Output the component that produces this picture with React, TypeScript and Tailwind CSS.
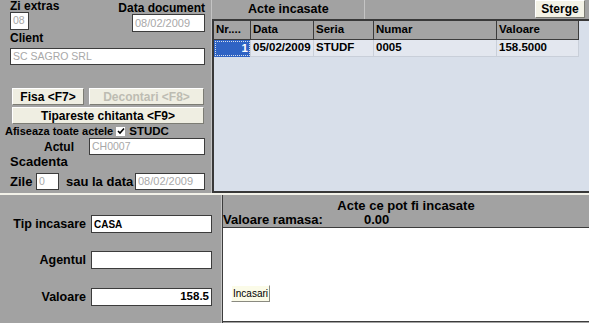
import React from "react";

const Field = ({
  className = "",
  children,
}: {
  className?: string;
  children?: React.ReactNode;
}) => (
  <div
    className={`bg-white border border-[#3c3c3c] flex items-center px-[2px] overflow-hidden whitespace-nowrap ${className}`}
  >
    {children}
  </div>
);

const WinButton = ({
  className = "",
  disabled = false,
  children,
}: {
  className?: string;
  disabled?: boolean;
  children: React.ReactNode;
}) => (
  <div
    className={`bg-[#efeee2] border border-t-white border-l-white border-b-[#7c7c74] border-r-[#7c7c74] flex items-center justify-center font-bold text-[12px] leading-none whitespace-nowrap ${
      disabled ? "text-[#bdbcb2]" : "text-black"
    } ${className}`}
  >
    {children}
  </div>
);

const columns = [
  { label: "Nr....", w: "w-[37px]" },
  { label: "Data", w: "w-[63px]" },
  { label: "Seria", w: "w-[60px]" },
  { label: "Numar", w: "w-[123px]" },
  { label: "Valoare", w: "w-[82px]" },
];

const rows = [{ nr: "1", data: "05/02/2009", seria: "STUDF", numar: "0005", valoare: "158.5000" }];

export default function App() {
  return (
    <div className="w-[589px] h-[323px] bg-[#a2a2a2] flex flex-col overflow-hidden font-['Liberation_Sans',Arial,sans-serif] text-black">
      {/* top half */}
      <div className="flex h-[193px]">
        {/* document details */}
        <div className="w-[211px] flex flex-col">
          <div className="flex justify-between h-[32px] pl-[10px] pr-[6px]">
            <div>
              <div className="text-[12px] font-bold leading-[12px]">Zi extras</div>
              <Field className="w-[19px] h-[18px] text-[10.5px] text-[#a8a8a8]">08</Field>
            </div>
            <div className="flex flex-col items-end">
              <div className="text-[12px] font-bold leading-[12px] mt-[2px]">Data document</div>
              <Field className="w-[73px] h-[18px] text-[11px] text-[#a8a8a8]">08/02/2009</Field>
            </div>
          </div>
          <div className="ml-[10px] text-[12px] font-bold leading-[12px]">Client</div>
          <Field className="ml-[10px] mt-[4px] w-[195px] h-[17px] text-[10.5px] text-[#a8a8a8]">SC SAGRO SRL</Field>

          <div className="flex ml-[12px] mt-[23px] gap-[5px]">
            <WinButton className="w-[72px] h-[17px]">Fisa &lt;F7&gt;</WinButton>
            <WinButton disabled className="w-[115px] h-[17px]">
              Decontari &lt;F8&gt;
            </WinButton>
          </div>
          <WinButton className="ml-[12px] mt-[2px] w-[192px] h-[17px]">Tipareste chitanta &lt;F9&gt;</WinButton>

          <div className="flex items-center ml-[5px] mt-[1px] h-[12px] text-[11px] font-bold leading-[12px]">
            <span>Afiseaza toate actele</span>
            <span className="ml-[3px] w-[9px] h-[9px] bg-white flex items-center justify-center">
              <svg width="8" height="8" viewBox="0 0 8 8">
                <path d="M1 4 L3 6 L7 1.5" fill="none" stroke="#000" strokeWidth="1.6" />
              </svg>
            </span>
            <span className="ml-[4px] text-[11.5px]">STUDC</span>
          </div>

          <div className="flex items-center mt-[1px] h-[17px]">
            <div className="ml-[44px] w-[45px] text-[12px] font-bold leading-[12px]">Actul</div>
            <Field className="w-[116px] h-[17px] text-[10.5px] text-[#a8a8a8]">CH0007</Field>
          </div>
          <div className="ml-[10px] text-[13px] font-bold leading-[13px]">Scadenta</div>
          <div className="flex items-center mt-[5px] h-[17px] ml-[10px]">
            <div className="w-[26px] text-[13px] font-bold leading-[13px]">Zile</div>
            <Field className="w-[23px] h-[17px] text-[10.5px] text-[#a8a8a8]">0</Field>
            <div className="ml-[7px] w-[69px] text-[13px] font-bold leading-[13px]">sau la data</div>
            <Field className="w-[70px] h-[17px] text-[11px] text-[#a8a8a8]">08/02/2009</Field>
          </div>
        </div>

        {/* acte incasate */}
        <div className="flex-1 flex flex-col border-l border-[#c4c4c4]">
          <div className="flex h-[19px] items-center">
            <div className="w-[153px] h-full border-r border-[#c4c4c4] flex items-center pl-[36px] text-[12.5px] font-bold">
              Acte incasate
            </div>
            <div className="flex-1" />
            <WinButton className="w-[50px] h-[18px] mr-[4px] -mt-[1px] bg-[#f3f2e6]">Sterge</WinButton>
          </div>
          <div className="flex-1 bg-[#d8dfea] border-t-2 border-l-2 border-b-2 border-[#383838]">
            <div className="flex h-[19px] text-[11.5px] font-bold">
              {columns.map((c) => (
                <div
                  key={c.label}
                  className={`${c.w} bg-[#a4a4a4] border-r border-b border-[#3c3c3c] flex items-center pl-[2px]`}
                >
                  {c.label}
                </div>
              ))}
            </div>
            {rows.map((r) => (
              <div key={r.nr} className="flex h-[17px] text-[11.5px] font-bold">
                <div className="w-[37px] bg-[#2f63c4] text-white border-r border-[#c9cfd9] flex items-center justify-end pr-[2px] outline-1 outline-dotted outline-[#d8dfea] -outline-offset-2">
                  {r.nr}
                </div>
                <div className="w-[63px] bg-[#e3e7ef] border-r border-b border-[#c9cfd9] flex items-center pl-[2px]">{r.data}</div>
                <div className="w-[60px] bg-[#e3e7ef] border-r border-b border-[#c9cfd9] flex items-center pl-[2px]">{r.seria}</div>
                <div className="w-[123px] bg-[#e3e7ef] border-r border-b border-[#c9cfd9] flex items-center pl-[2px]">{r.numar}</div>
                <div className="w-[82px] bg-[#e3e7ef] border-r border-b border-[#c9cfd9] flex items-center pl-[2px]">{r.valoare}</div>
              </div>
            ))}
          </div>
        </div>
      </div>

      {/* bottom half */}
      <div className="flex flex-1 border-t-2 border-[#f2f1e8]">
        <div className="w-[222px] border-r border-[#c4c4c4] flex flex-col pt-[20px]">
          <div className="flex items-center h-[18px]">
            <div className="w-[86px] text-right text-[12.5px] font-bold">Tip incasare</div>
            <Field className="ml-[5px] w-[121px] h-[18px] text-[10px] font-bold">CASA</Field>
          </div>
          <div className="flex items-center h-[18px] mt-[18px]">
            <div className="w-[86px] text-right text-[12.5px] font-bold">Agentul</div>
            <Field className="ml-[5px] w-[121px] h-[18px]" />
          </div>
          <div className="flex items-center h-[18px] mt-[19px]">
            <div className="w-[86px] text-right text-[12.5px] font-bold">Valoare</div>
            <Field className="ml-[5px] w-[121px] h-[18px] justify-end text-[11.5px] font-bold">158.5</Field>
          </div>
        </div>

        <div className="flex-1 flex flex-col border-l border-[#3c3c3c]">
          <div className="text-center text-[13px] font-bold leading-[15px] mt-[3px]">Acte ce pot fi incasate</div>
          <div className="flex text-[13px] font-bold leading-[14px]">
            <span className="w-[141px]">Valoare ramasa:</span>
            <span>0.00</span>
          </div>
          <div className="flex-1 bg-white border-t border-b border-[#3c3c3c] mb-[1px]">
            <div className="ml-[8px] mt-[57px] w-[39px] h-[17px] bg-[#fbfbe8] border border-t-white border-l-white border-b-[#8a8a80] border-r-[#8a8a80] flex items-center justify-center text-[10px] leading-none">
              Incasari
            </div>
          </div>
        </div>
      </div>
    </div>
  );
}
